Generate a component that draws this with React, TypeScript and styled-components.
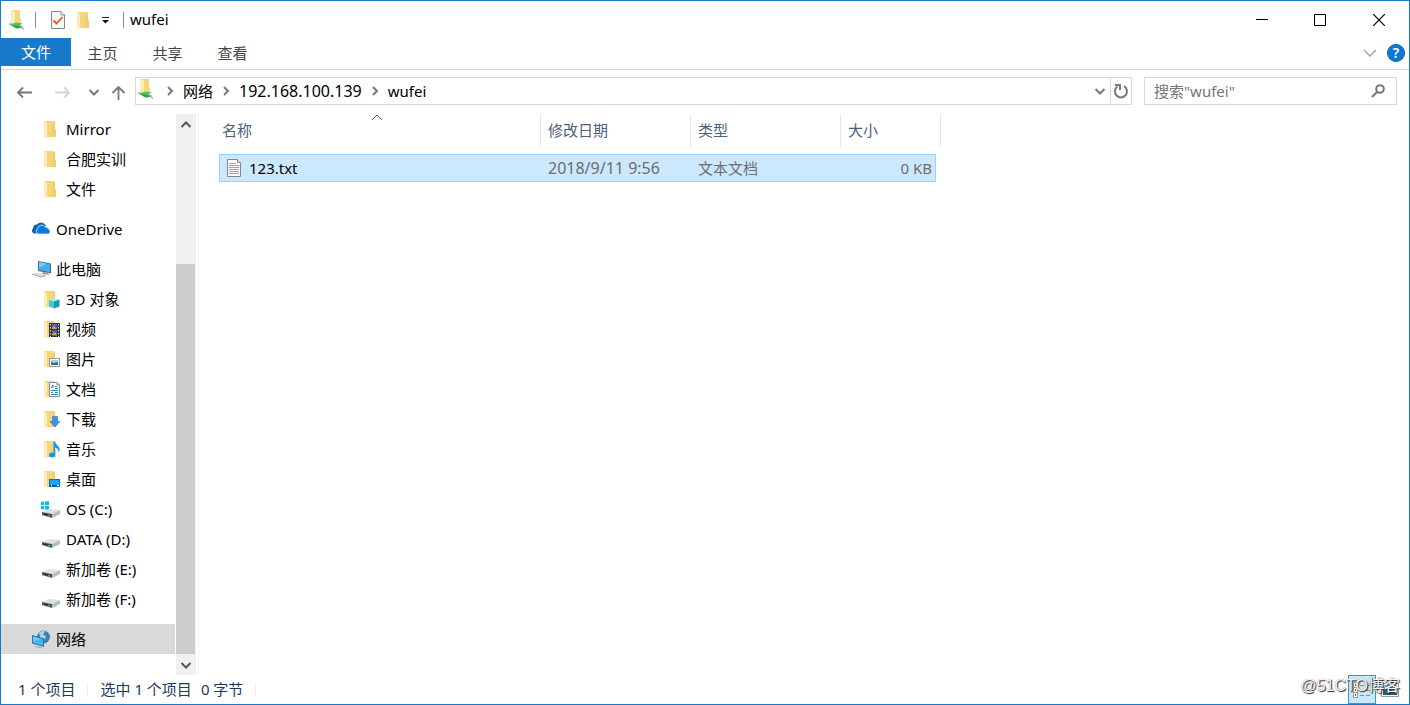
import React from "react";
import styled, { createGlobalStyle, css } from "styled-components";

const GlobalStyle = createGlobalStyle`
  * { box-sizing: border-box; }
  body {
    margin: 0;
    background: #fff;
    color: #000;
    font-family: "Noto Sans", "Noto Sans CJK SC", sans-serif;
    font-size: 15px;
    line-height: 20px;
  }
  button, input {
    font: inherit;
    color: inherit;
  }
  svg { display: block; flex: none; }
`;

/* ---------- icons ---------- */

const FolderShape = () => (
  <>
    <path d="M4 2H14L15 3V10L16 11V18H6L4 16Z" fill="#f6d67c" />
    <path d="M13 3H15V10L16 11V18H11Z" fill="#efc765" opacity=".6" />
    <path d="M4 2L7 4V18.5L6 19.5L4 17.5Z" fill="#fdecb8" />
  </>
);

const FolderIcon = ({ children }: { children?: React.ReactNode }) => (
  <svg width="20" height="20" viewBox="0 0 20 20" aria-hidden="true">
    <FolderShape />
    {children}
  </svg>
);

const NetFolderIcon = () => (
  <svg width="20" height="22" viewBox="0 0 20 22" aria-hidden="true">
    <path d="M4 1H13V9L14 10V15H5L4 14Z" fill="#f6d67c" />
    <path d="M4 1L8 3V16L4 14Z" fill="#fdecb8" />
    <path d="M2 15L16 18.500" stroke="#b4b9bb" strokeWidth="2" />
    <path d="M3 15.500L9 13.500L16 14.500L13 16L15 18.500L9 19.500Z" fill="#4fc765" />
    <path d="M4 16L10 19.500L15 18.500L11 16.500Z" fill="#2ba548" />
    <path d="M13 18L17 19.500V21Z" fill="#9aa3a6" />
  </svg>
);

const CheckDocIcon = () => (
  <svg width="16" height="20" viewBox="0 0 16 20" aria-hidden="true">
    <path d="M1.500 1.500H11L14.500 5V18.500H1.500Z" fill="#f7f7f7" stroke="#858585" />
    <path d="M11 1.500V5H14.500" fill="#fff" stroke="#858585" />
    <path d="M3.500 10.500L6.500 13.500L12.500 7" fill="none" stroke="#e8541e" strokeWidth="1.800" />
  </svg>
);

const OneDriveIcon = () => (
  <svg width="20" height="20" viewBox="0 0 20 20" aria-hidden="true">
    <path d="M4.500 14.500A2.800 2.800 0 0 1 3 9.500A4 4 0 0 1 7 5.500A5 5 0 0 1 15 5.500A4 4 0 0 1 16 7L9 14.500Z" fill="#0f62b8" />
    <path d="M8.500 15A3 3 0 0 1 7.500 9.700A4.300 4.300 0 0 1 15.300 8A3.500 3.500 0 0 1 18.500 10A2.700 2.700 0 0 1 18.500 15Z" fill="#0c7bdc" stroke="#fff" strokeWidth=".7" />
  </svg>
);

const ComputerIcon = () => (
  <svg width="22" height="20" viewBox="0 0 22 20" aria-hidden="true">
    <path d="M8 2L21 4.500V14.500L8 12Z" fill="#4a6a7d" />
    <path d="M9 3.200L20 5.300V13.200L9 11Z" fill="#42aef0" />
    <path d="M9 3.200L17 4.800L9 9Z" fill="#7ccbf8" />
    <path d="M13 13L17 14L20 16L12 15Z" fill="#8c979d" />
    <path d="M2 15L7 13.500L16 16.500L11 18.500Z" fill="#d6dbde" />
    <path d="M2 15L11 18L16 16.500" fill="none" stroke="#a5adb2" />
  </svg>
);

const NetworkIcon = () => (
  <svg width="20" height="20" viewBox="0 0 20 20" aria-hidden="true">
    <circle cx="13.500" cy="8" r="6.500" fill="#3d84ab" />
    <path d="M9 4Q12 1 15 2L13 6L16 7L15 10L11 10Z" fill="#a7d5e8" />
    <path d="M2 6L14 9.500V18L2 14.500Z" fill="#2d729e" />
    <path d="M3 7.400L13 10.300V16.700L3 13.800Z" fill="#43b4f4" />
    <path d="M3 7.400L11 9.700L3 12.500Z" fill="#72cafa" />
    <path d="M5 17.500L12 19" stroke="#a3acb0" strokeWidth="1.200" />
  </svg>
);

const DriveIcon = ({ system }: { system?: boolean }) => (
  <svg width="20" height="20" viewBox="0 0 20 20" aria-hidden="true">
    {system && (
      <g fill="#10b4f0">
        <path d="M1 3L4 2.500V6H1ZM5 2.400L9 2V6H5ZM1 7H4V10.500L1 10ZM5 7H9V11L5 10.600Z" />
      </g>
    )}
    <path d="M2 13L9 10L20 11L12 15Z" fill="#dfe1e3" />
    <path d="M12 15L20 11V15L12 19Z" fill="#b9bcbf" />
    <path d="M2 13L12 15V19L2 16Z" fill="#55585a" />
    <path d="M3.500 14.500L11 16.300V17.300L3.500 15.500Z" fill="#25282a" />
    <rect x="8" y="16" width="2" height="1.500" fill="#33c53c" />
  </svg>
);

const TextFileIcon = () => (
  <svg width="16" height="20" viewBox="0 0 16 20" aria-hidden="true">
    <path d="M1.500.5H11.500L14.500 3.500V17.500H1.500Z" fill="#fbfbfb" stroke="#868686" />
    <path d="M11.500.5V3.500H14.500" fill="#fff" stroke="#868686" />
    <path d="M3 4.500H10M3 6.500H13M3 8.500H13M3 10.500H13M3 12.500H13M3 14.500H13" stroke="#a2a2a2" />
  </svg>
);

type Direction = "up" | "down" | "right";
const chevronPaths: Record<Direction, string> = {
  up: "M2.500 10L7 5.500L11.500 10",
  down: "M2.500 5L7 9.500L11.500 5",
  right: "M5 3L9 7L5 11",
};
const Chevron = ({ dir, color = "#777", weight = 2 }: { dir: Direction; color?: string; weight?: number }) => (
  <svg width="14" height="14" viewBox="0 0 14 14" aria-hidden="true">
    <path d={chevronPaths[dir]} fill="none" stroke={color} strokeWidth={weight} />
  </svg>
);

const Arrow = ({ kind, color }: { kind: "back" | "forward" | "up"; color: string }) => {
  const d = {
    back: "M16 8.500H2M7 3.500L2 8.500L7 13.500",
    forward: "M1 8.500H15M10 3.500L15 8.500L10 13.500",
    up: "M8.500 16V3M2.500 9L8.500 3L14.500 9",
  }[kind];
  return (
    <svg width="17" height="17" viewBox="0 0 17 17" aria-hidden="true">
      <path d={d} fill="none" stroke={color} strokeWidth="1.800" />
    </svg>
  );
};

/* ---------- window frame ---------- */

const Window = styled.div`
  display: flex;
  flex-direction: column;
  min-height: 100vh;
  border: 1px solid #1979ca;
  background: #fff;
`;

const IconButton = styled.button<{ $width: number }>`
  display: flex;
  align-items: center;
  justify-content: center;
  width: ${(p) => p.$width}px;
  padding: 0;
  border: 0;
  background: none;
`;

const TitleBar = styled.header`
  display: flex;
  align-items: stretch;
  height: 37px;
`;

const QuickAccess = styled.div`
  display: flex;
  align-items: center;
  padding-left: 6px;
`;

const DividerSlot = styled.span<{ $width: number }>`
  display: flex;
  justify-content: center;
  width: ${(p) => p.$width}px;
`;

const BarDivider = styled.span`
  width: 1px;
  height: 16px;
  background: #8c8c8c;
`;

const Title = styled.h1`
  flex: 1;
  margin: 0;
  padding-left: 3px;
  font-size: 15px;
  font-weight: 400;
  line-height: 36px;
`;

const Ribbon = styled.nav`
  display: flex;
  align-items: flex-start;
  height: 32px;
  border-bottom: 1px solid #dadbdc;
`;

const Tab = styled.button<{ $primary?: boolean }>`
  width: ${(p) => (p.$primary ? 70 : 65)}px;
  height: 28px;
  padding: ${(p) => (p.$primary ? "0" : "1px 2px 0 0")};
  border: 0;
  background: ${(p) => (p.$primary ? "#1979ca" : "none")};
  color: ${(p) => (p.$primary ? "#fff" : "#444")};
  line-height: 28px;
`;

const RibbonTools = styled.div`
  display: flex;
  align-items: center;
  gap: 8px;
  height: 30px;
  margin-left: auto;
  padding-right: 4px;
`;

const HelpButton = styled.button`
  width: 18px;
  height: 18px;
  padding: 0;
  border: 1px solid #0a62b0;
  border-radius: 50%;
  background: #0c78d8;
  color: #fff;
  font-size: 14px;
  font-weight: 600;
  line-height: 16px;
`;

/* ---------- address row ---------- */

const AddressRow = styled.div`
  display: flex;
  align-items: center;
  height: 42px;
  margin-bottom: 2px;
  padding-right: 12px;
`;

const NavButtons = styled.div`
  display: flex;
  align-items: center;
  width: 134px;
  padding: 2px 0 0 5px;
`;

const AddressBox = styled.div`
  display: flex;
  flex: 1;
  height: 28px;
  border: 1px solid #d9d9d9;
`;

const Crumbs = styled.ol`
  display: flex;
  flex: 1;
  align-items: center;
  margin: 0;
  padding: 0 0 0 1px;
  list-style: none;
`;

const Crumb = styled.li`
  display: flex;
  align-items: center;
`;

const CrumbSeparator = styled.span`
  display: flex;
  justify-content: center;
  width: 26px;
`;

const CrumbLink = styled.a<{ $numeric?: boolean }>`
  color: #000;
  font-size: ${(p) => (p.$numeric ? 16 : 15)}px;
  text-decoration: none;
`;

const RefreshButton = styled(IconButton)`
  border-left: 1px solid #d9d9d9;
`;

const SearchBox = styled.form`
  display: flex;
  width: 253px;
  height: 28px;
  margin-left: 12px;
  border: 1px solid #d9d9d9;
`;

const SearchInput = styled.input`
  flex: 1;
  min-width: 0;
  padding: 0 0 0 9px;
  border: 0;
  outline: 0;
  background: none;
  &::placeholder { color: #767676; opacity: 1; }
`;

/* ---------- body ---------- */

const Body = styled.div`
  display: flex;
  flex: 1;
`;

const Sidebar = styled.nav`
  width: 175px;
  padding-right: 1px;
`;

const TreeGroup = styled.ul`
  margin: 0 0 10px;
  padding: 0;
  list-style: none;
`;

const TreeLink = styled.a<{ $nested?: boolean; $selected?: boolean }>`
  display: flex;
  align-items: center;
  height: 30px;
  padding-left: ${(p) => (p.$nested ? 39 : 29)}px;
  color: #000;
  text-decoration: none;
  white-space: nowrap;
  ${(p) => p.$selected && css`background: #d9d9d9;`}
`;

const TreeIcon = styled.span`
  width: 26px;
`;

const ScrollBar = styled.div`
  display: flex;
  flex-direction: column;
  width: 20px;
  background: #f0f0f0;
`;

const ScrollButton = styled(IconButton)`
  height: 20px;
`;

const ScrollTrack = styled.div`
  display: flex;
  flex: 1;
  flex-direction: column;
  justify-content: flex-end;
  padding-bottom: 1px;
`;

const ScrollThumb = styled.div`
  width: 19px;
  height: 75%;
  background: #cdcdcd;
`;

const FilePane = styled.main`
  flex: 1;
  margin-left: 2px;
  padding-left: 20px;
  border-left: 1px solid #f3f3f3;
`;

const FileTable = styled.table`
  display: block;
  text-align: left;
`;

const HeadGroup = styled.thead`
  display: block;
`;

const BodyGroup = styled.tbody`
  display: block;
`;

const HeadRow = styled.tr`
  display: grid;
  grid-template-columns: 322px 150px 150px 100px;
  height: 33px;
  margin-bottom: 7px;
`;

const HeadCell = styled.th`
  position: relative;
  padding: 0 0 0 7px;
  border-right: 1px solid #e5e5e5;
  color: #4c607a;
  font-weight: 400;
  line-height: 33px;
  &:first-child { padding-left: 3px; }
`;

const SortMark = styled.span`
  position: absolute;
  top: -3px;
  left: 50%;
  margin-left: -10px;
`;

const FileRow = styled.tr`
  display: grid;
  grid-template-columns: 321px 150px 150px 93px;
  width: 717px;
  height: 28px;
  border: 1px solid #99d1ff;
  background: #cce8ff;
`;

const Cell = styled.td<{ $numeric?: boolean; $end?: boolean }>`
  padding: 0 2px 0 7px;
  color: #6d6d6d;
  font-size: ${(p) => (p.$numeric ? 16 : 15)}px;
  line-height: 27px;
  text-align: ${(p) => (p.$end ? "right" : "left")};
`;

const NameCell = styled(Cell)`
  display: flex;
  align-items: center;
  gap: 7px;
  padding-left: 6px;
  color: #000;
`;

/* ---------- status bar ---------- */

const StatusBar = styled.footer`
  position: relative;
  display: flex;
  align-items: center;
  height: 29px;
  padding-left: 17px;
  color: #1e395b;
`;

const StatusItem = styled.span<{ $wide?: boolean }>`
  margin-right: ${(p) => (p.$wide ? 12 : 9)}px;
  padding-bottom: 2px;
  white-space: nowrap;
`;

const StatusDivider = styled.span`
  width: 1px;
  height: 14px;
  margin-right: 12px;
  background: #ededed;
`;

const ViewButtons = styled.div`
  display: flex;
  margin-left: auto;
  padding-right: 5px;
`;

const ViewButton = styled(IconButton)<{ $active?: boolean }>`
  height: 29px;
  ${(p) => p.$active && css`
    border: 1px solid #26a0da;
    background: #cbe8f6;
  `}
`;

const Watermark = styled.span`
  position: absolute;
  right: 9px;
  top: 1px;
  color: #f4f4f4;
  font-family: "Liberation Sans", "Noto Sans CJK SC", sans-serif;
  font-size: 16px;
  text-shadow: 1px 1px 1px #222, 0 0 1px #888;
  pointer-events: none;
`;

/* ---------- data ---------- */

type Entry = { label: string; icon: React.ReactNode; nested?: boolean; selected?: boolean };

const groups: Entry[][] = [
  [
    { label: "Mirror", icon: <FolderIcon />, nested: true },
    { label: "合肥实训", icon: <FolderIcon />, nested: true },
    { label: "文件", icon: <FolderIcon />, nested: true },
  ],
  [{ label: "OneDrive", icon: <OneDriveIcon /> }],
  [
    { label: "此电脑", icon: <ComputerIcon /> },
    {
      label: "3D 对象",
      nested: true,
      icon: (
        <FolderIcon>
          <path d="M9 11L14 9L19.500 10.500L14 12.500Z" fill="#a4ecf4" />
          <path d="M9 11L14 12.500V19.500L9 17.500Z" fill="#45c6da" />
          <path d="M19.500 10.500L14 12.500V19.500L19.500 17.500Z" fill="#159db7" />
        </FolderIcon>
      ),
    },
    {
      label: "视频",
      nested: true,
      icon: (
        <FolderIcon>
          <rect x="9" y="4" width="11" height="14" fill="#343434" />
          <path d="M10.500 5V18M18.500 5V18" stroke="#ddd" strokeDasharray="1.500 1.500" />
          <rect x="12" y="5" width="5" height="5" fill="#4b6cc2" />
          <rect x="12" y="11" width="5" height="6" fill="#3f5fb5" />
          <path d="M12 9L14 7L17 10H12ZM12 15L15 13L17 16H12Z" fill="#e69a53" />
        </FolderIcon>
      ),
    },
    {
      label: "图片",
      nested: true,
      icon: (
        <FolderIcon>
          <rect x="9.500" y="9.500" width="10" height="8" fill="#fff" stroke="#979797" />
          <rect x="11" y="11" width="7" height="5" fill="#9fd0f1" />
          <path d="M11 13L14 14L18 13V16H11Z" fill="#2f747f" />
        </FolderIcon>
      ),
    },
    {
      label: "文档",
      nested: true,
      icon: (
        <FolderIcon>
          <path d="M9.500 3.500H17L19.500 6V17.500H9.500Z" fill="#fff" stroke="#8b8b8b" />
          <path d="M17 3.500V6H19.500" fill="none" stroke="#8b8b8b" />
          <path d="M11 9L13 6V9M15 7.500H17M15 9.500H18M11 11.500H18M11 13.500H13M15 13.500H18M11 15.500H18" fill="none" stroke="#2786be" />
        </FolderIcon>
      ),
    },
    {
      label: "下载",
      nested: true,
      icon: (
        <FolderIcon>
          <path d="M12.500 7.500H17.500V12.500H20L15 18L10 12.500H12.500Z" fill="#3f94e3" stroke="#2675bf" strokeWidth=".6" />
        </FolderIcon>
      ),
    },
    {
      label: "音乐",
      nested: true,
      icon: (
        <FolderIcon>
          <ellipse cx="12" cy="16" rx="3" ry="2.500" fill="#0b9af4" />
          <path d="M13.500 2.500H15Q16 5.500 18 7Q21 10 18.500 14Q19 10 15 8.500V16.500H13.500Z" fill="#0b9af4" />
        </FolderIcon>
      ),
    },
    {
      label: "桌面",
      nested: true,
      icon: (
        <FolderIcon>
          <rect x="9.500" y="10.500" width="10" height="7" fill="#18a6fa" stroke="#12709f" />
          <path d="M10 16.500H19" stroke="#174c6c" />
          <path d="M11 16.500H12M17 16.500H19" stroke="#fff" />
        </FolderIcon>
      ),
    },
    { label: "OS (C:)", icon: <DriveIcon system />, nested: true },
    { label: "DATA (D:)", icon: <DriveIcon />, nested: true },
    { label: "新加卷 (E:)", icon: <DriveIcon />, nested: true },
    { label: "新加卷 (F:)", icon: <DriveIcon />, nested: true },
  ],
  [{ label: "网络", icon: <NetworkIcon />, selected: true }],
];

const crumbs = [
  { label: "网络" },
  { label: "192.168.100.139", numeric: true },
  { label: "wufei" },
];

const files = [{ name: "123.txt", modified: "2018/9/11 9:56", type: "文本文档", size: "0 KB" }];

export default function App() {
  return (
    <>
      <GlobalStyle />
      <Window>
        <TitleBar>
          <QuickAccess>
            <NetFolderIcon />
            <DividerSlot $width={16}><BarDivider /></DividerSlot>
            <IconButton $width={30} aria-label="属性"><CheckDocIcon /></IconButton>
            <IconButton $width={20} aria-label="新建文件夹"><FolderIcon /></IconButton>
            <IconButton $width={26} aria-label="自定义快速访问工具栏">
              <svg width="8" height="8" viewBox="0 0 8 8" aria-hidden="true">
                <path d="M0 1.500H7" stroke="#222" />
                <path d="M0 4H7L3.500 7.500Z" fill="#111" />
              </svg>
            </IconButton>
            <DividerSlot $width={8}><BarDivider /></DividerSlot>
          </QuickAccess>
          <Title>wufei</Title>
          <IconButton $width={58} aria-label="最小化">
            <svg width="12" height="12" viewBox="0 0 12 12"><path d="M0 5.500H12" stroke="#000" /></svg>
          </IconButton>
          <IconButton $width={58} aria-label="最大化">
            <svg width="12" height="12" viewBox="0 0 12 12"><path d="M.5.5H11.500V11.500H.5Z" fill="none" stroke="#000" /></svg>
          </IconButton>
          <IconButton $width={60} aria-label="关闭">
            <svg width="12" height="12" viewBox="0 0 12 12"><path d="M0 0L12 12M12 0L0 12" stroke="#000" strokeWidth="1.200" /></svg>
          </IconButton>
        </TitleBar>

        <Ribbon aria-label="功能区">
          <Tab $primary>文件</Tab>
          <Tab>主页</Tab>
          <Tab>共享</Tab>
          <Tab>查看</Tab>
          <RibbonTools>
            <IconButton $width={18} aria-label="展开功能区">
              <svg width="14" height="8" viewBox="0 0 14 8"><path d="M1 1L7 7L13 1" fill="none" stroke="#a6a6a6" strokeWidth="1.500" /></svg>
            </IconButton>
            <HelpButton aria-label="帮助">?</HelpButton>
          </RibbonTools>
        </Ribbon>

        <AddressRow>
          <NavButtons>
            <IconButton $width={36} aria-label="后退"><Arrow kind="back" color="#777" /></IconButton>
            <IconButton $width={41} aria-label="前进"><Arrow kind="forward" color="#d6d6d6" /></IconButton>
            <IconButton $width={21} aria-label="最近浏览的位置"><Chevron dir="down" /></IconButton>
            <IconButton $width={29} aria-label="上移"><Arrow kind="up" color="#777" /></IconButton>
          </NavButtons>
          <AddressBox>
            <NetFolderIcon />
            <Crumbs>
              {crumbs.map((crumb) => (
                <Crumb key={crumb.label}>
                  <CrumbSeparator><Chevron dir="right" /></CrumbSeparator>
                  <CrumbLink href="#" $numeric={crumb.numeric}>{crumb.label}</CrumbLink>
                </Crumb>
              ))}
            </Crumbs>
            <IconButton $width={20} aria-label="以前的位置"><Chevron dir="down" /></IconButton>
            <RefreshButton $width={21} aria-label="刷新">
              <svg width="16" height="16" viewBox="0 0 16 16">
                <path d="M11 3.200A6 6 0 1 1 4.500 3.500" fill="none" stroke="#777" strokeWidth="2" />
                <path d="M2 2H7V7" fill="none" stroke="#777" strokeWidth="2" />
              </svg>
            </RefreshButton>
          </AddressBox>
          <SearchBox role="search">
            <SearchInput type="text" aria-label="搜索" placeholder={'搜索"wufei"'} />
            <IconButton type="button" $width={36} aria-label="开始搜索">
              <svg width="16" height="16" viewBox="0 0 16 16">
                <circle cx="10" cy="6" r="3.800" fill="none" stroke="#777" strokeWidth="2" />
                <path d="M7.500 8.500L2 14" stroke="#777" strokeWidth="2.200" />
              </svg>
            </IconButton>
          </SearchBox>
        </AddressRow>

        <Body>
          <Sidebar aria-label="导航窗格">
            {groups.map((group) => (
              <TreeGroup key={group[0].label}>
                {group.map((entry) => (
                  <li key={entry.label}>
                    <TreeLink href="#" $nested={entry.nested} $selected={entry.selected}>
                      <TreeIcon>{entry.icon}</TreeIcon>
                      {entry.label}
                    </TreeLink>
                  </li>
                ))}
              </TreeGroup>
            ))}
          </Sidebar>
          <ScrollBar>
            <ScrollButton $width={19} aria-label="向上滚动"><Chevron dir="up" color="#555" /></ScrollButton>
            <ScrollTrack><ScrollThumb /></ScrollTrack>
            <ScrollButton $width={19} aria-label="向下滚动"><Chevron dir="down" color="#555" /></ScrollButton>
          </ScrollBar>
          <FilePane>
            <FileTable>
              <HeadGroup>
                <HeadRow>
                  <HeadCell>
                    名称
                    <SortMark>
                      <svg width="14" height="14" viewBox="0 0 14 14"><path d="M2 9L7 4L12 9" fill="none" stroke="#666" /></svg>
                    </SortMark>
                  </HeadCell>
                  <HeadCell>修改日期</HeadCell>
                  <HeadCell>类型</HeadCell>
                  <HeadCell>大小</HeadCell>
                </HeadRow>
              </HeadGroup>
              <BodyGroup>
                {files.map((file) => (
                  <FileRow key={file.name}>
                    <NameCell><TextFileIcon />{file.name}</NameCell>
                    <Cell $numeric>{file.modified}</Cell>
                    <Cell>{file.type}</Cell>
                    <Cell $end>{file.size}</Cell>
                  </FileRow>
                ))}
              </BodyGroup>
            </FileTable>
          </FilePane>
        </Body>

        <StatusBar>
          <StatusItem $wide>1 个项目</StatusItem>
          <StatusDivider />
          <StatusItem>选中 1 个项目</StatusItem>
          <StatusItem $wide>0 字节</StatusItem>
          <StatusDivider />
          <ViewButtons>
            <ViewButton $width={28} $active aria-label="详细信息">
              <svg width="18" height="16" viewBox="0 0 18 16">
                <path d="M.5.5H4.500V15.500H.5ZM.5 5.500H4.500M.5 10.500H4.500" fill="#fff" stroke="#999" />
                <path d="M2 3H3M2 8H3M2 13H3" stroke="#d03a20" strokeWidth="2" />
                <path d="M7 3.500H11M13 3.500H17M7 8.500H11M13 8.500H17M7 13.500H11M13 13.500H17" stroke="#888" />
              </svg>
            </ViewButton>
            <ViewButton $width={28} aria-label="大图标">
              <svg width="18" height="14" viewBox="0 0 18 14">
                <rect x=".5" y=".5" width="17" height="13" fill="#fff" stroke="#999" />
                <rect x="2" y="2" width="14" height="10" fill="#6eb3e8" />
                <path d="M2 7L7 6L16 9V12H2Z" fill="#245a73" />
              </svg>
            </ViewButton>
          </ViewButtons>
          <Watermark>@51CTO博客</Watermark>
        </StatusBar>
      </Window>
    </>
  );
}
